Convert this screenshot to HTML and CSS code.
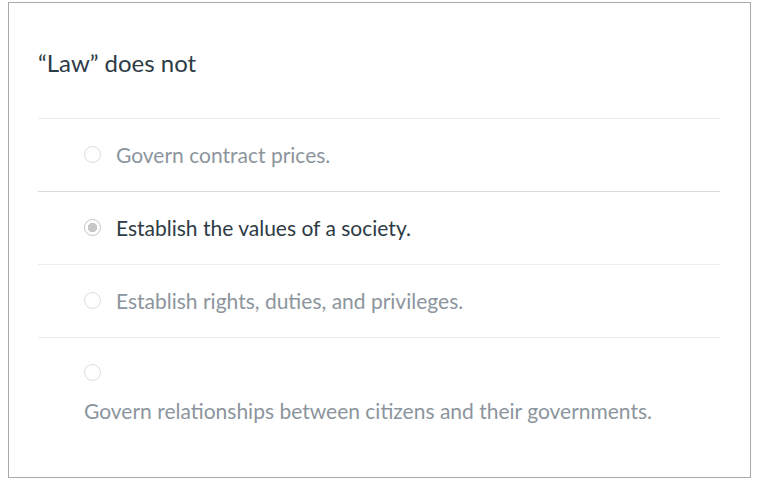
FILE: index.html
```html
<!DOCTYPE html>
<html lang="en">
<head>
<meta charset="utf-8">
<title>Quiz question</title>
<link rel="stylesheet" href="styles.css">
</head>
<body>
<div class="card">
  <div class="question">“Law” does not</div>
  <div class="answers">
    <div class="answer">
      <span class="radio"></span>
      <span class="label muted">Govern contract prices.</span>
    </div>
    <div class="answer selected">
      <span class="radio checked"></span>
      <span class="label">Establish the values of a society.</span>
    </div>
    <div class="answer">
      <span class="radio"></span>
      <span class="label muted">Establish rights, duties, and privileges.</span>
    </div>
    <div class="answer stacked">
      <span class="radio"></span>
      <span class="label muted">Govern relationships between citizens and their governments.</span>
    </div>
  </div>
</div>
</body>
</html>
```
FILE: styles.css
```css
html, body {
  margin: 0;
  padding: 0;
  background: #ffffff;
}
body {
  font-family: Lato, "Open Sans", sans-serif;
  color: #2d3b45;
}
.card {
  box-sizing: border-box;
  margin: 2px 0 0 8px;
  width: 743px;
  height: 476px;
  border: 1px solid #a9a9a9;
  padding: 0 30px 0 29px;
}
.question {
  font-size: 24px;
  line-height: 30px;
  padding-top: 45px;
  box-sizing: border-box;
  height: 115px;
}
.answers {
  display: flex;
  flex-direction: column;
}
.answer {
  display: flex;
  align-items: center;
  height: 72px;
  border-top: 1px solid #ececec;
  padding-left: 46px;
  font-size: 21px;
}
.answer.selected {
  border-top-color: #d9d9d9;
}
.radio {
  box-sizing: border-box;
  flex: none;
  width: 17px;
  height: 17px;
  border-radius: 50%;
  border: 1px solid #dcdcdc;
  background: #ffffff;
  margin-right: 15px;
  margin-top: -2px;
}
.radio.checked {
  border-color: #c4c4c4;
  background: radial-gradient(circle, #c8c8c8 0 4.5px, #ffffff 5px);
}
.label {
  color: #2d3b45;
  margin-bottom: 2px;
}
.label.muted {
  color: #8c959d;
}
.answer.stacked {
  flex-direction: column;
  align-items: flex-start;
  height: auto;
  padding-top: 26px;
}
.answer.stacked .radio {
  margin: 0;
}
.answer.stacked .label {
  margin-top: 17px;
  margin-bottom: 0;
  margin-left: 0;
}
```
